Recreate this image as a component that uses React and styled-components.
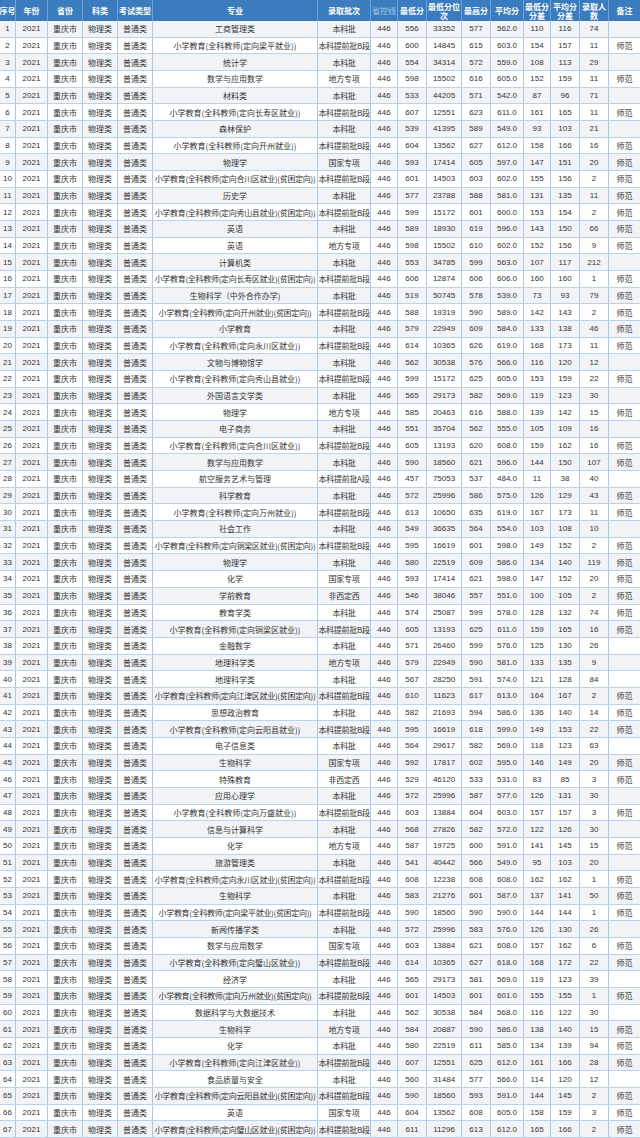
import React from "react";
import styled, { createGlobalStyle } from "styled-components";

const GlobalStyle = createGlobalStyle`
  html, body { margin: 0; padding: 0; background: #ffffff; }
  body { font-family: "Liberation Sans", "Noto Sans CJK SC", sans-serif; }
`;

const COLS = "16px 32px 35px 35px 35px 165px 53px 27px 29px 35px 29px 33px 27px 29px 29px 31px";

const Table = styled.div`
  width: 640px;
  height: 1138px;
  display: grid;
  grid-template-rows: 21px repeat(67, 1fr);
  overflow: hidden;
`;

const HeadRow = styled.div`
  display: grid;
  grid-template-columns: ${COLS};
  background: #3a7cbd;
`;

const HeadCell = styled.div`
  display: flex;
  align-items: center;
  justify-content: center;
  text-align: center;
  color: ${(p) => (p.$dim ? "#a9c8e8" : "#ffffff")};
  font-weight: ${(p) => (p.$dim ? 400 : 700)};
  font-size: 8px;
  line-height: 9px;
  font-family: "Noto Sans CJK SC", sans-serif;
  border-right: 1px solid #6ea3d6;
  overflow: hidden;
  white-space: ${(p) => (p.$wrap ? "normal" : "nowrap")};
  word-break: break-all;
  &:last-child { border-right: none; }
`;

const Row = styled.div`
  display: grid;
  grid-template-columns: ${COLS};
  background: ${(p) => (p.$alt ? "#f1f3f7" : "#ffffff")};
  border-bottom: 1px solid #b9d3ec;
  min-height: 0;
`;

const Cell = styled.div`
  display: flex;
  align-items: center;
  justify-content: center;
  border-right: 1px solid #a8c9e8;
  font-size: 8px;
  color: #333333;
  white-space: nowrap;
  overflow: hidden;
  font-family: ${(p) =>
    p.$cjk ? '"Noto Sans CJK SC", sans-serif' : '"Liberation Sans", "Noto Sans CJK SC", sans-serif'};
  letter-spacing: ${(p) => (p.$tight ? "-0.3px" : "0")};
  &:last-child { border-right: none; }
`;

const headers = [
  { t: "序号" },
  { t: "年份" },
  { t: "省份" },
  { t: "科类" },
  { t: "考试类型" },
  { t: "专业" },
  { t: "录取批次" },
  { t: "省控线", dim: true },
  { t: "最低分" },
  { t: "最低分位次", wrap: true },
  { t: "最高分" },
  { t: "平均分" },
  { t: "最低分分差", wrap: true },
  { t: "平均分分差", wrap: true },
  { t: "录取人数", wrap: true },
  { t: "备注" },
];

const B = "本科批";
const PB = "本科提前批B段";
const raw = `工商管理类|本科批|556|33352|577|562.0|110|116|74|
小学教育(全科教师(定向梁平就业))|PB|600|14845|615|603.0|154|157|11|师范
统计学|本科批|554|34314|572|559.0|108|113|29|
数学与应用数学|地方专项|598|15502|616|605.0|152|159|11|师范
材料类|本科批|533|44205|571|542.0|87|96|71|
小学教育(全科教师(定向长寿区就业))|PB|607|12551|623|611.0|161|165|11|师范
森林保护|本科批|539|41395|589|549.0|93|103|21|
小学教育(全科教师(定向开州就业))|PB|604|13562|627|612.0|158|166|16|师范
物理学|国家专项|593|17414|605|597.0|147|151|20|师范
小学教育(全科教师(定向合川区就业)(贫困定向))|PB|601|14503|603|602.0|155|156|2|师范
历史学|本科批|577|23788|588|581.0|131|135|11|师范
小学教育(全科教师(定向秀山县就业)(贫困定向))|PB|599|15172|601|600.0|153|154|2|师范
英语|本科批|589|18930|619|596.0|143|150|66|师范
英语|地方专项|598|15502|610|602.0|152|156|9|师范
计算机类|本科批|553|34785|599|563.0|107|117|212|
小学教育(全科教师(定向长寿区就业)(贫困定向))|PB|606|12874|606|606.0|160|160|1|师范
生物科学（中外合作办学)|本科批|519|50745|578|539.0|73|93|79|师范
小学教育(全科教师(定向开州就业)(贫困定向))|PB|588|19319|590|589.0|142|143|2|师范
小学教育|本科批|579|22949|609|584.0|133|138|46|师范
小学教育(全科教师(定向永川区就业))|PB|614|10365|626|619.0|168|173|11|师范
文物与博物馆学|本科批|562|30538|576|566.0|116|120|12|
小学教育(全科教师(定向秀山县就业))|PB|599|15172|625|605.0|153|159|22|师范
外国语言文学类|本科批|565|29173|582|569.0|119|123|30|
物理学|地方专项|585|20463|616|588.0|139|142|15|师范
电子商务|本科批|551|35704|562|555.0|105|109|16|
小学教育(全科教师(定向合川区就业))|PB|605|13193|620|608.0|159|162|16|师范
数学与应用数学|本科批|590|18560|621|596.0|144|150|107|师范
航空服务艺术与管理|本科提前批A段|457|75053|537|484.0|11|38|40|
科学教育|本科批|572|25996|586|575.0|126|129|43|师范
小学教育(全科教师(定向万州就业))|PB|613|10650|635|619.0|167|173|11|师范
社会工作|本科批|549|36635|564|554.0|103|108|10|
小学教育(全科教师(定向铜梁区就业)(贫困定向))|PB|595|16619|601|598.0|149|152|2|师范
物理学|本科批|580|22519|609|586.0|134|140|119|师范
化学|国家专项|593|17414|621|598.0|147|152|20|师范
学前教育|非西定西|546|38046|557|551.0|100|105|2|师范
教育学类|本科批|574|25087|599|578.0|128|132|74|师范
小学教育(全科教师(定向铜梁区就业))|PB|605|13193|625|611.0|159|165|16|师范
金融数学|本科批|571|26460|599|576.0|125|130|26|
地理科学类|地方专项|579|22949|590|581.0|133|135|9|
地理科学类|本科批|567|28250|591|574.0|121|128|84|
小学教育(全科教师(定向江津区就业)(贫困定向))|PB|610|11623|617|613.0|164|167|2|师范
思想政治教育|本科批|582|21693|594|586.0|136|140|14|师范
小学教育(全科教师(定向云阳县就业))|PB|595|16619|618|599.0|149|153|22|师范
电子信息类|本科批|564|29617|582|569.0|118|123|63|
生物科学|国家专项|592|17817|602|595.0|146|149|20|师范
特殊教育|非西定西|529|46120|533|531.0|83|85|3|师范
应用心理学|本科批|572|25996|587|577.0|126|131|30|
小学教育(全科教师(定向万盛就业))|PB|603|13884|604|603.0|157|157|3|师范
信息与计算科学|本科批|568|27826|582|572.0|122|126|30|
化学|地方专项|587|19725|600|591.0|141|145|15|师范
旅游管理类|本科批|541|40442|566|549.0|95|103|20|
小学教育(全科教师(定向永川区就业)(贫困定向))|PB|608|12238|608|608.0|162|162|1|师范
生物科学|本科批|583|21276|601|587.0|137|141|50|师范
小学教育(全科教师(定向梁平就业)(贫困定向))|PB|590|18560|590|590.0|144|144|1|师范
新闻传播学类|本科批|572|25996|583|576.0|126|130|26|
数学与应用数学|国家专项|603|13884|621|608.0|157|162|6|师范
小学教育(全科教师(定向璧山区就业))|PB|614|10365|627|618.0|168|172|22|师范
经济学|本科批|565|29173|581|569.0|119|123|39|
小学教育(全科教师(定向万州就业)(贫困定向))|PB|601|14503|601|601.0|155|155|1|师范
数据科学与大数据技术|本科批|562|30538|584|568.0|116|122|30|
生物科学|地方专项|584|20887|590|586.0|138|140|15|师范
化学|本科批|580|22519|611|585.0|134|139|94|师范
小学教育(全科教师(定向江津区就业))|PB|607|12551|625|612.0|161|166|28|师范
食品质量与安全|本科批|560|31484|577|566.0|114|120|12|
小学教育(全科教师(定向云阳县就业)(贫困定向))|PB|590|18560|593|591.0|144|145|2|师范
英语|国家专项|604|13562|608|605.0|158|159|3|师范
小学教育(全科教师(定向璧山区就业)(贫困定向))|PB|611|11296|613|612.0|165|166|2|师范`;

const rows = raw.split("\n").map((line, i) => {
  const f = line.split("|");
  return {
    no: i + 1,
    major: f[0],
    batch: f[1] === "PB" ? PB : f[1],
    min: f[2],
    rank: f[3],
    max: f[4],
    avg: f[5],
    dmin: f[6],
    davg: f[7],
    count: f[8],
    note: f[9] || "",
  };
});

export default function App() {
  return (
    <>
      <GlobalStyle />
      <Table>
        <HeadRow>
          {headers.map((h) => (
            <HeadCell key={h.t} $dim={h.dim} $wrap={h.wrap}>
              {h.t}
            </HeadCell>
          ))}
        </HeadRow>
        {rows.map((r) => (
          <Row key={r.no} $alt={r.no % 2 === 1}>
            <Cell>{r.no}</Cell>
            <Cell>2021</Cell>
            <Cell $cjk>重庆市</Cell>
            <Cell $cjk>物理类</Cell>
            <Cell $cjk>普通类</Cell>
            <Cell $cjk $tight={r.major.length > 20}>{r.major}</Cell>
            <Cell $cjk $tight>{r.batch}</Cell>
            <Cell>446</Cell>
            <Cell>{r.min}</Cell>
            <Cell>{r.rank}</Cell>
            <Cell>{r.max}</Cell>
            <Cell>{r.avg}</Cell>
            <Cell>{r.dmin}</Cell>
            <Cell>{r.davg}</Cell>
            <Cell>{r.count}</Cell>
            <Cell $cjk>{r.note}</Cell>
          </Row>
        ))}
      </Table>
    </>
  );
}
